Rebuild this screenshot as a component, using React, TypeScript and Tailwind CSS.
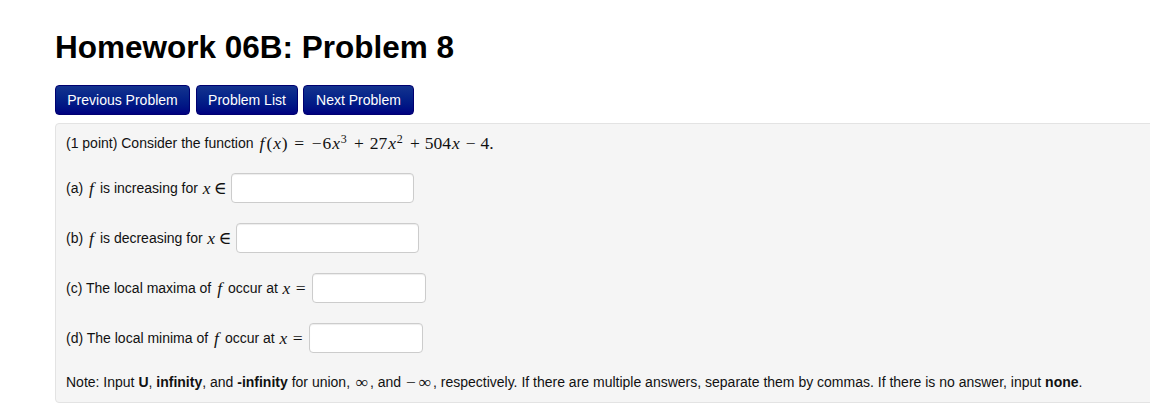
import React from "react";

const M = ({ children }: { children: React.ReactNode }) => (
  <span className="font-['Liberation_Serif','DejaVu_Serif',serif] text-[17.5px] whitespace-nowrap inline-flex items-baseline">
    {children}
  </span>
);
const F = () => <span className="inline-block w-[9px] text-center italic">f</span>;
const X = () => <span className="inline-block w-[9.5px] text-center italic">x</span>;
const Op = ({ c, w }: { c: string; w: string }) => <span className={`inline-block ${w} text-center`}>{c}</span>;
const Sup = ({ c, w }: { c: string; w: string }) => (
  <span className={`inline-block ${w} text-left text-[12px] relative -top-[6px]`}>{c}</span>
);

const Box = ({ w }: { w: string }) => (
  <input
    type="text"
    className={`${w} h-[30px] ml-[2px] rounded-[4px] border border-[#cccccc] bg-white shadow-[inset_0_1px_1px_rgba(0,0,0,0.075)] outline-none`}
  />
);

export default function App() {
  const btn =
    "h-[30px] rounded-[4px] border border-[#000070] bg-gradient-to-b from-[#14338f] to-[#000080] text-white text-[14px] leading-[28px] text-center font-['Liberation_Sans',Arial,sans-serif]";
  return (
    <div className="w-[1150px] h-[418px] overflow-hidden bg-white font-['Liberation_Sans',Arial,sans-serif] text-[#111]">
      <div className="pl-[55px] pt-[29px]">
        <h1 className="text-[31.5px] leading-[36px] font-bold text-black">Homework 06B: Problem 8</h1>
        <div className="mt-[20px] flex">
          <button className={`${btn} w-[135px]`}>Previous Problem</button>
          <button className={`${btn} w-[102px] ml-[6px]`}>Problem List</button>
          <button className={`${btn} w-[111px] ml-[5px]`}>Next Problem</button>
        </div>
        <div className="mt-[8px] w-[1120px] h-[280px] rounded-[4px] border border-[#e3e3e3] bg-[#f5f5f5] pl-[10px] pt-[9px] text-[14px]">
          <div className="h-[20px] flex items-center">
            <span>(1 point) Consider the function&nbsp;</span>
            <M>
              <F />(<X />)
              <Op c="=" w="w-[23px]" />
              <Op c="−" w="w-[12px]" />6<X />
              <Sup c="3" w="w-[7px]" />
              <Op c="+" w="w-[22px]" />
              27<X />
              <Sup c="2" w="w-[8px]" />
              <Op c="+" w="w-[20px]" />
              504
              <X />
              <Op c="−" w="w-[20px]" />
              4.
            </M>
          </div>
          <div className="mt-[20px] h-[30px] flex items-center">
            <span>(a)&nbsp;</span>
            <M>
              <F />
            </M>
            <span>&nbsp;is increasing for&nbsp;</span>
            <M>
              <X />
              <Op c="∈" w="w-[18px]" />
            </M>
            <Box w="w-[183px]" />
          </div>
          <div className="mt-[20px] h-[30px] flex items-center">
            <span>(b)&nbsp;</span>
            <M>
              <F />
            </M>
            <span>&nbsp;is decreasing for&nbsp;</span>
            <M>
              <X />
              <Op c="∈" w="w-[18px]" />
            </M>
            <Box w="w-[183px]" />
          </div>
          <div className="mt-[20px] h-[30px] flex items-center">
            <span>(c) The local maxima of&nbsp;</span>
            <M>
              <F />
            </M>
            <span>&nbsp;occur at&nbsp;</span>
            <M>
              <X />
              <Op c="=" w="w-[19px]" />
            </M>
            <Box w="w-[114px]" />
          </div>
          <div className="mt-[20px] h-[30px] flex items-center">
            <span>(d) The local minima of&nbsp;</span>
            <M>
              <F />
            </M>
            <span>&nbsp;occur at&nbsp;</span>
            <M>
              <X />
              <Op c="=" w="w-[19px]" />
            </M>
            <Box w="w-[114px]" />
          </div>
          <div className="mt-[19px] h-[20px] flex items-center whitespace-nowrap">
            <span>
              Note: Input <b>U</b>, <b>infinity</b>, and <b>-infinity</b> for union,&nbsp;
            </span>
            <M>
              <Op c="∞" w="w-[16px]" />
            </M>
            <span>, and&nbsp;</span>
            <M>
              <Op c="−" w="w-[12px]" />
              <Op c="∞" w="w-[16px]" />
            </M>
            <span>
              , respectively. If there are multiple answers, separate them by commas. If there is no answer, input{" "}
              <b>none</b>.
            </span>
          </div>
        </div>
      </div>
    </div>
  );
}
